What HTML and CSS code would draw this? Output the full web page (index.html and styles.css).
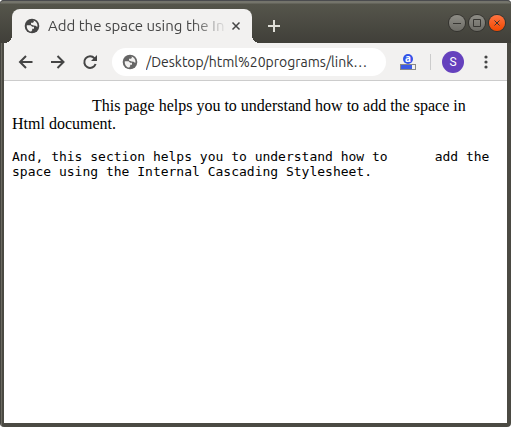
FILE: index.html
```
<!DOCTYPE html>
<html lang="en">
<head>
<meta charset="utf-8">
<title>Add the space using the In</title>
<link rel="stylesheet" href="styles.css">
</head>
<body>
<svg class="defs" aria-hidden="true">
  <symbol id="globe" viewBox="0 0 16 16">
    <circle cx="8" cy="8" r="7.300" fill="currentColor"/>
    <path class="land" d="M2.800 7.200h3.800l1.600 1.600h1.800v2H8.200v1.400l-1 1.400C4.200 13.200 2.400 10.500 2.800 7.200zM9.200 2.400l.8 1-1 1.400H7v1.600l2.600 1.200 2 .2 1.700 1.200A5.500 5.500 0 0 0 9.200 2.400z"/>
  </symbol>
</svg>
<div class="window">
  <header class="titlebar">
    <div class="tab">
      <svg class="globe"><use href="#globe"/></svg>
      <span class="tab-title">Add the space using the In</span>
      <button class="tab-close" aria-label="Close tab">
        <svg viewBox="0 0 10 10"><path d="M1.500 1.500l7 7M8.500 1.500l-7 7"/></svg>
      </button>
    </div>
    <button class="new-tab" aria-label="New tab">
      <svg viewBox="0 0 12 12"><path d="M6 0v12M0 6h12"/></svg>
    </button>
    <div class="controls">
      <button class="control" aria-label="Minimize"><svg viewBox="0 0 16 16"><path d="M4 8.500h8"/></svg></button>
      <button class="control" aria-label="Maximize"><svg viewBox="0 0 16 16"><path d="M4.500 4.500h7v7h-7z"/></svg></button>
      <button class="control control-close" aria-label="Close"><svg viewBox="0 0 16 16"><path d="M5.500 5.500l5 5M10.500 5.500l-5 5"/></svg></button>
    </div>
  </header>
  <nav class="toolbar">
    <button class="tool" aria-label="Back"><svg viewBox="0 0 14 14"><path d="M13.500 7H1.500M7 1L1 7l6 6"/></svg></button>
    <button class="tool" aria-label="Forward"><svg viewBox="0 0 14 14"><path d="M0 7h12M6.500 1l6 6-6 6"/></svg></button>
    <button class="tool" aria-label="Reload"><svg viewBox="0 0 14 14"><path d="M11.500 3.300A5.800 5.800 0 1 0 12.600 9"/><path class="solid" d="M14 0v6H8z"/></svg></button>
    <div class="address">
      <svg class="globe globe-light"><use href="#globe"/></svg>
      <input class="url" type="text" aria-label="Address" value="/Desktop/html%20programs/link…">
    </div>
    <button class="extension" aria-label="Extension">
      <span class="letter">a</span>
      <svg viewBox="0 0 16 6"><path fill="#888" d="M0 0h16v6H0z"/><path fill="#f2f1f0" d="M12 1h3v4h-3z"/><path fill="#3b5be5" d="M1 1h11v4H1z"/></svg>
    </button>
    <span class="divider"></span>
    <button class="avatar" aria-label="Profile">S</button>
    <button class="menu" aria-label="Menu"><svg viewBox="0 0 4 14"><circle cx="2" cy="2" r="1.600"/><circle cx="2" cy="7" r="1.600"/><circle cx="2" cy="12" r="1.600"/></svg></button>
  </nav>
  <main class="page">
    <p class="indented">This page helps you to understand how to add the space in Html document.</p>
    <p class="mono">And, this section helps you to understand how to      add the space using the Internal Cascading Stylesheet.</p>
  </main>
</div>
</body>
</html>
```
FILE: styles.css
```
* { box-sizing: border-box; }
html { background: #fff; }
body { margin: 0; }
button { margin: 0; padding: 0; border: 0; background: none; display: flex; align-items: center; justify-content: center; flex: none; }
svg { display: block; flex: none; }
.defs { position: absolute; width: 0; height: 0; }

.window {
  display: flex;
  flex-direction: column;
  min-height: 100vh;
  padding: 0 4px 4px;
  border-radius: 4px;
  background: linear-gradient(90deg, #45443f 0 1px, #6b6a61 1px 2px, #4b4a43 2px);
}

.titlebar {
  display: flex;
  align-items: flex-end;
  height: 43px;
  margin: 0 -4px;
  padding-left: 12px;
  border-top: 1px solid #4a4b4e;
  border-radius: 4px 4px 0 0;
  background: linear-gradient(#74746b 0 2px, #55554b 3px, #403f39);
}
.tab {
  position: relative;
  display: flex;
  align-items: center;
  width: 240px;
  height: 34px;
  padding: 0 8px 0 12px;
  border-radius: 8px 8px 0 0;
  background: #f2f1f0;
  color: #454545;
}
.tab::before, .tab::after {
  content: "";
  position: absolute;
  bottom: 0;
  width: 8px;
  height: 8px;
}
.tab::before { right: 100%; background: radial-gradient(circle at 0 0, transparent 8px, #f2f1f0 8px); }
.tab::after { left: 100%; background: radial-gradient(circle at 100% 0, transparent 8px, #f2f1f0 8px); }
.globe { width: 16px; height: 16px; color: #454545; }
.globe-light { color: #666; }
.land { fill: #f2f1f0; }
.tab-title {
  flex: 1;
  min-width: 0;
  margin: 0 0 0 8px;
  white-space: nowrap;
  font: 15px/20px Ubuntu, "Noto Sans", sans-serif;
  -webkit-mask-image: linear-gradient(90deg, #000 144px, transparent 180px);
  mask-image: linear-gradient(90deg, #000 144px, transparent 180px);
}
.tab-close { width: 16px; height: 16px; }
.tab-close svg { width: 10px; height: 10px; fill: none; stroke: #454545; stroke-width: 1.5; }
.new-tab { width: 28px; height: 34px; margin-left: 8px; }
.new-tab svg { width: 12px; height: 12px; stroke: #e0dfd8; stroke-width: 2; }
.controls { display: flex; gap: 4px; margin: 0 6px 12px auto; }
.control {
  width: 16px;
  height: 16px;
  border-radius: 50%;
  background: linear-gradient(#8e8d86, #6c6b65);
  box-shadow: 0 0 0 1px #34332f;
}
.control svg { width: 16px; height: 16px; fill: none; stroke: #373632; }
.control-close { background: linear-gradient(#ff7442, #f04800); }

.toolbar {
  display: flex;
  align-items: center;
  height: 38px;
  padding: 0 13px 0 6px;
  border-bottom: 1px solid #ccc;
  background: #f2f1f0;
}
.tool { width: 32px; height: 28px; }
.tool svg { width: 14px; height: 14px; fill: none; stroke: #454545; stroke-width: 2; overflow: visible; }
.tool .solid { fill: #454545; stroke: none; }
.address {
  display: flex;
  align-items: center;
  flex: 1;
  min-width: 0;
  height: 28px;
  margin-left: 6px;
  padding: 0 10px;
  border-radius: 14px;
  background: #fff;
}
.url {
  flex: 1;
  min-width: 0;
  height: 24px;
  margin-left: 8px;
  padding: 0;
  border: 0;
  background: none;
  color: #333;
  font: 14px/20px Ubuntu, "Noto Sans", sans-serif;
}
.extension { flex-direction: column; width: 16px; margin-left: 14px; }
.letter {
  width: 10px;
  height: 10px;
  border-radius: 50%;
  background: #3152e8;
  color: #fff;
  font: bold 10px/8px "Noto Sans", sans-serif;
  text-align: center;
}
.extension svg { width: 16px; height: 6px; }
.divider { width: 1px; height: 16px; margin: 0 11px 0 14px; background: #ccc; }
.avatar {
  width: 22px;
  height: 22px;
  border-radius: 50%;
  background: #6541bd;
  color: #fff;
  font: 12px/22px Roboto, sans-serif;
}
.menu { width: 16px; height: 28px; margin-left: 14px; }
.menu svg { width: 4px; height: 14px; fill: #454545; }

.page { flex: 1; padding: 16px 8px; background: #fff; color: #000; }
.page p { margin: 0 0 16px; }
.indented { font: 16px/18px "Liberation Serif", serif; text-indent: 80px; }
.page .mono { font: 13px/15px "DejaVu Sans Mono", monospace; white-space: pre-wrap; }
```
